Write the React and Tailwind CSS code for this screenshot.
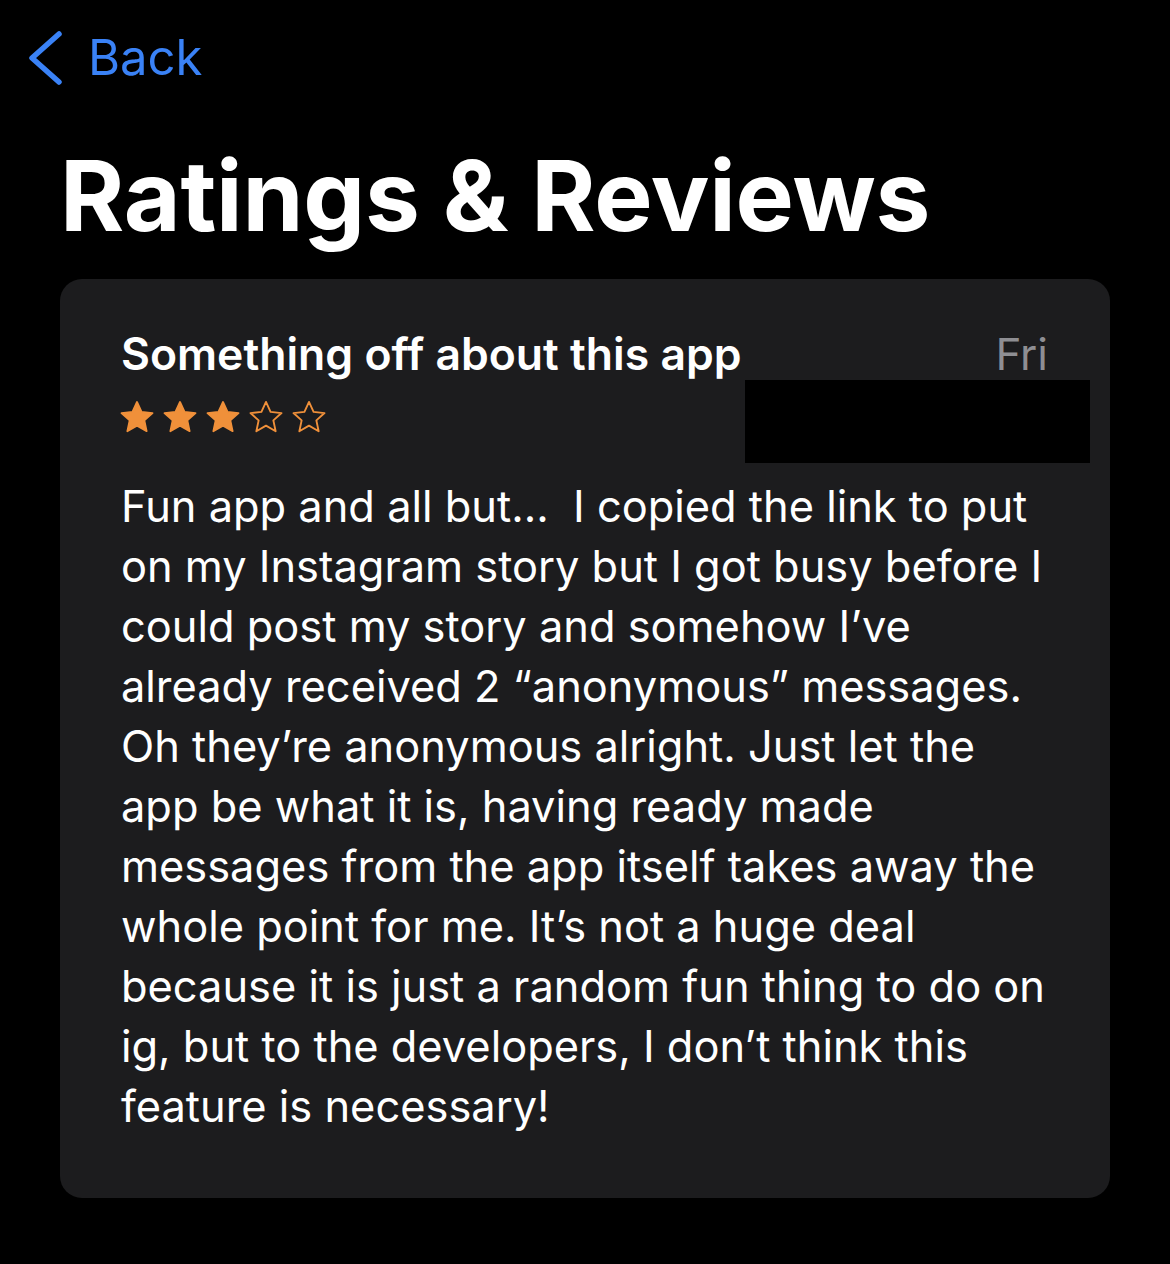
import React from "react";

const lines = [
  "Fun app and all but…  I copied the link to put",
  "on my Instagram story but I got busy before I",
  "could post my story and somehow I’ve",
  "already received 2 “anonymous” messages.",
  "Oh they’re anonymous alright. Just let the",
  "app be what it is, having ready made",
  "messages from the app itself takes away the",
  "whole point for me. It’s not a huge deal",
  "because it is just a random fun thing to do on",
  "ig, but to the developers, I don’t think this",
  "feature is necessary!",
];

function Star({ filled }) {
  return (
    <svg width="34" height="33" viewBox="1.6 1.9 20.8 19.2" className="shrink-0">
      <path
        d="M12 2.6l2.8 6.1 6.7.7-5 4.5 1.4 6.6L12 17.1l-5.9 3.4 1.4-6.6-5-4.5 6.7-.7z"
        fill={filled ? "#f0903a" : "none"}
        stroke="#f0903a"
        strokeWidth={filled ? 1.1 : 1.15}
        strokeLinejoin="round"
      />
    </svg>
  );
}

export default function App() {
  return (
    <div
      className="min-h-[1264px] w-[1170px] bg-black text-white"
      style={{ fontFamily: "Inter, 'Noto Sans', sans-serif" }}
    >
      {/* navigation */}
      <div className="flex items-center pt-[28px] h-[88px]">
        <svg width="40" height="60" viewBox="0 0 40 60" className="ml-[25px]">
          <path
            d="M34 6 L7 30 L34 54"
            fill="none"
            stroke="#3a82f6"
            strokeWidth="5.5"
            strokeLinecap="round"
            strokeLinejoin="round"
          />
        </svg>
        <span className="ml-[23px] text-[49px] leading-[60px] text-[#3a82f6]">Back</span>
      </div>

      <h1 className="mt-[53px] pl-[60px] text-[98px] leading-[110px] font-bold tracking-[-0.2px]">
        Ratings &amp; Reviews
      </h1>

      {/* review card */}
      <div className="relative mx-[60px] mt-[28px] rounded-[22px] bg-[#1c1c1e] pl-[61px] pr-[62px] pt-[47px] pb-[62px]">
        <div className="flex items-baseline justify-between">
          <span className="text-[44.5px] leading-[56px] font-semibold">Something off about this app</span>
          <span className="text-[44px] leading-[56px] text-[#8e8e93]">Fri</span>
        </div>
        <div className="mt-[18px] flex gap-[9px] -ml-[1px]">
          <Star filled />
          <Star filled />
          <Star filled />
          <Star />
          <Star />
        </div>
        <div className="mt-[43px] text-[43.4px] leading-[60px]">
          {lines.map((l, i) => (
            <div key={i} className="whitespace-pre">
              {l}
            </div>
          ))}
        </div>
        <div className="absolute left-[685px] top-[101px] h-[83px] w-[345px] bg-black" />
      </div>
    </div>
  );
}
